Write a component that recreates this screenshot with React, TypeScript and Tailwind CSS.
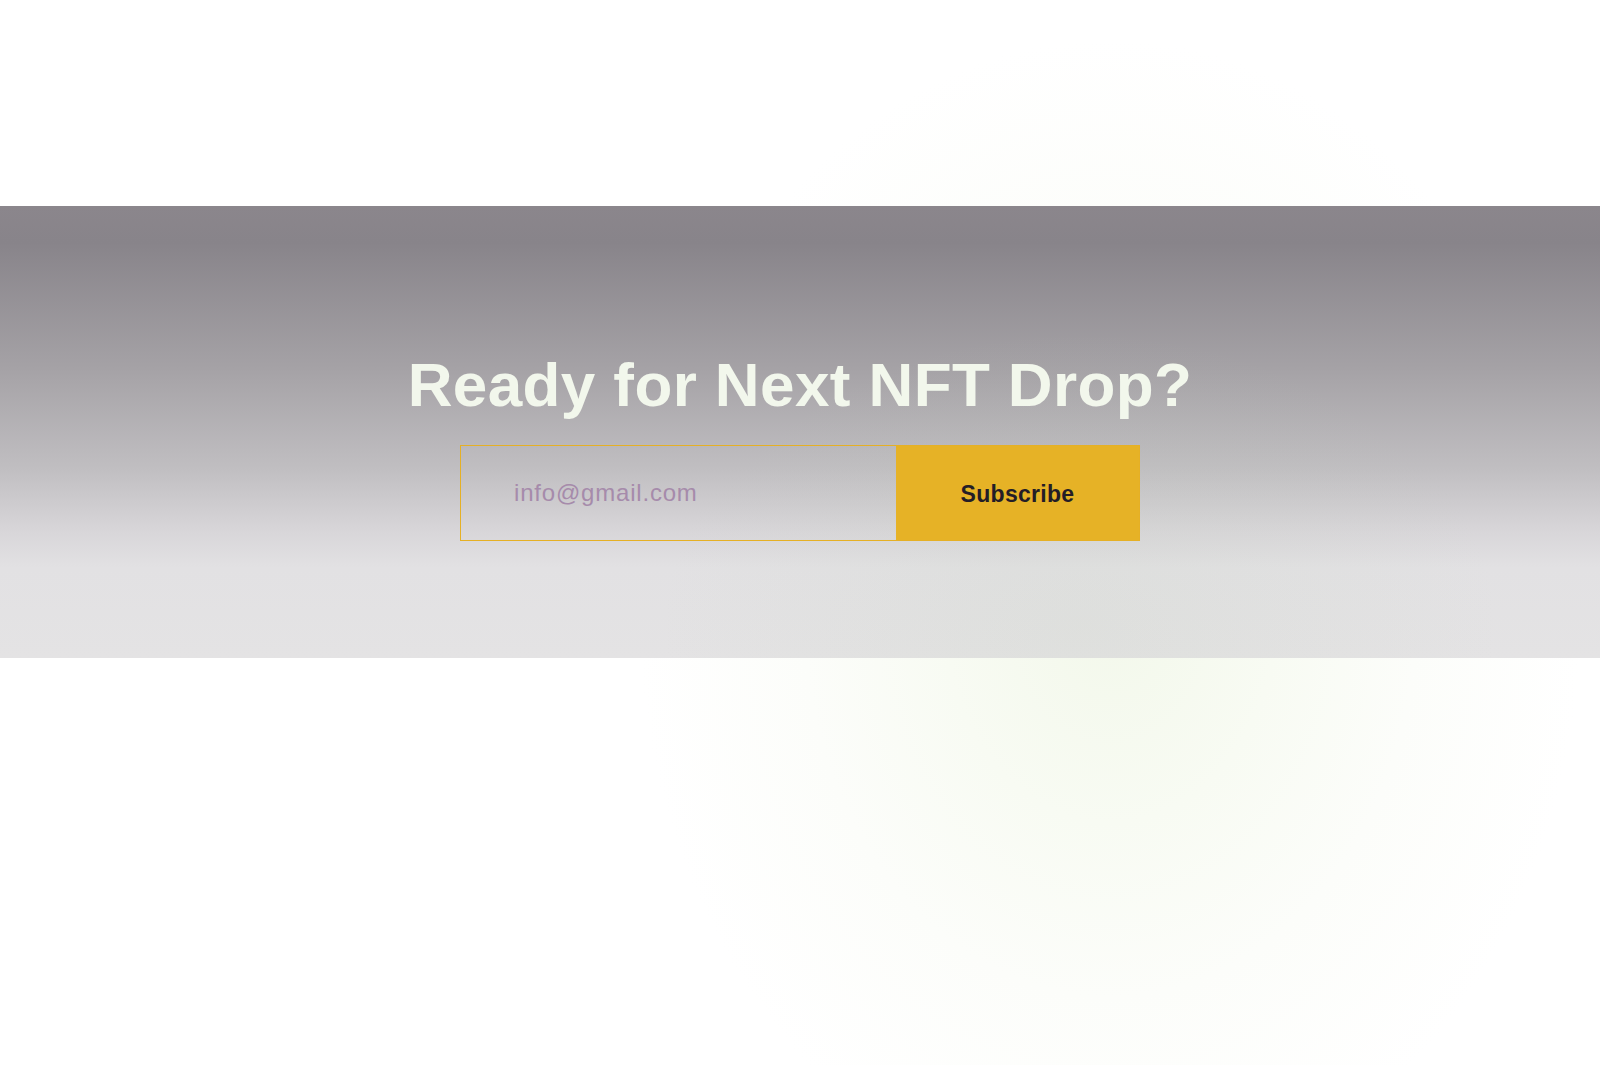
import React from "react";

export default function App() {
  return (
    <div className="relative w-full h-[1065px] overflow-hidden bg-white bg-[radial-gradient(ellipse_470px_580px_at_1110px_620px,#f3f8eb_0%,#f8fbf3_35%,#fcfdfa_65%,#ffffff_100%)]">
      <div className="h-[206px]" />
      <section className="relative h-[452px] bg-[linear-gradient(180deg,#8b868c_0%,#88848a_8%,#a5a2a6_36%,#c0bec1_58%,#d8d6d9_72%,#e2e1e3_80%,#e4e3e4_100%)]">
        <div className="absolute inset-0 bg-[radial-gradient(ellipse_420px_300px_at_1080px_420px,rgba(190,205,180,0.14)_0%,rgba(190,205,180,0)_100%)]" />
        <div className="relative flex flex-col items-center pt-[148px]">
          <h2 className="text-[62px] leading-[62px] font-bold text-[#f2f7ec] tracking-[0.4px] font-['Liberation_Sans',Arial,sans-serif]">
            Ready for Next NFT Drop?
          </h2>
          <form className="mt-[29px] flex w-[680px] h-[96px] border border-[#e5b025]" onSubmit={(e) => e.preventDefault()}>
            <input
              type="email"
              placeholder="info@gmail.com"
              className="w-[435px] h-full bg-transparent pl-[53px] pr-4 text-[24px] tracking-[0.8px] text-[#5b4a5e] placeholder:text-[#a68bab] outline-none font-['Liberation_Sans',Arial,sans-serif]"
            />
            <button
              type="submit"
              className="flex-1 h-full bg-[#e6b226] text-[#241d27] text-[23px] font-bold tracking-[0.3px] pt-[3px] font-['Liberation_Sans',Arial,sans-serif]"
            >
              Subscribe
            </button>
          </form>
        </div>
      </section>
    </div>
  );
}
